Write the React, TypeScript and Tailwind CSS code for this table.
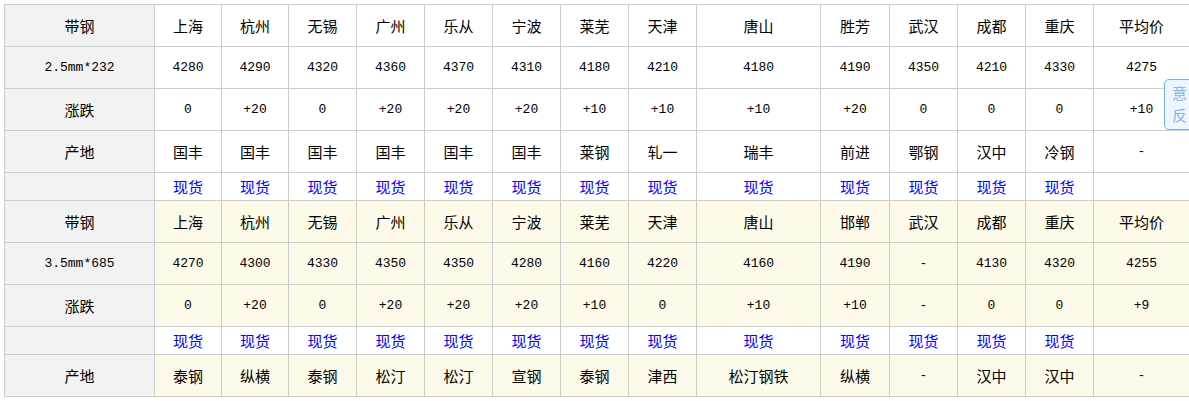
import React from "react";

const cities1 = ["上海", "杭州", "无锡", "广州", "乐从", "宁波", "莱芜", "天津", "唐山", "胜芳", "武汉", "成都", "重庆", "平均价"];
const cities2 = ["上海", "杭州", "无锡", "广州", "乐从", "宁波", "莱芜", "天津", "唐山", "邯郸", "武汉", "成都", "重庆", "平均价"];

const block1 = {
  spec: "2.5mm*232",
  cities: cities1,
  prices: ["4280", "4290", "4320", "4360", "4370", "4310", "4180", "4210", "4180", "4190", "4350", "4210", "4330", "4275"],
  changes: ["0", "+20", "0", "+20", "+20", "+20", "+10", "+10", "+10", "+20", "0", "0", "0", "+10"],
  origins: ["国丰", "国丰", "国丰", "国丰", "国丰", "国丰", "莱钢", "轧一", "瑞丰", "前进", "鄂钢", "汉中", "冷钢", "-"],
};

const block2 = {
  spec: "3.5mm*685",
  cities: cities2,
  prices: ["4270", "4300", "4330", "4350", "4350", "4280", "4160", "4220", "4160", "4190", "-", "4130", "4320", "4255"],
  changes: ["0", "+20", "0", "+20", "+20", "+20", "+10", "0", "+10", "+10", "-", "0", "0", "+9"],
  origins: ["泰钢", "纵横", "泰钢", "松汀", "松汀", "宣钢", "泰钢", "津西", "松汀钢铁", "纵横", "-", "汉中", "汉中", "-"],
};

const cnFont = "[font-family:'Noto_Sans_CJK_SC','Noto_Sans',sans-serif] text-[15px]";
const monoFont = "[font-family:'Liberation_Mono','DejaVu_Sans_Mono',monospace] text-[13px]";

function C({ children, bg, mono, link }: { children?: React.ReactNode; bg: string; mono?: boolean; link?: boolean }) {
  return (
    <div
      className={`flex items-center justify-center border-r border-b border-[#cccccc] ${bg} ${
        mono ? monoFont : cnFont
      } ${link ? "text-[#0000ff]" : "text-black"} leading-none whitespace-nowrap`}
    >
      {children}
    </div>
  );
}

function Block({ data, cream }: { data: typeof block1; cream: boolean }) {
  const dbg = cream ? "bg-[#fdfaea]" : "bg-white";
  const head = "bg-[#f2f2f2]";
  const isNum = (s: string) => /^[-+0-9.]+$/.test(s);
  const spotRow = (
    <>
      <C bg={head}></C>
      {data.cities.map((_, i) =>
        i < 13 ? (
          <C key={"s" + i} bg="bg-white" link>
            现货
          </C>
        ) : (
          <C key={"s" + i} bg="bg-white"></C>
        )
      )}
    </>
  );
  const originRow = (
    <>
      <C bg={head}>产地</C>
      {data.origins.map((c, i) => (
        <C key={"o" + i} bg={dbg} mono={isNum(c)}>
          {c}
        </C>
      ))}
    </>
  );
  return (
    <>
      <C bg={head}>带钢</C>
      {data.cities.map((c, i) => (
        <C key={"c" + i} bg={dbg}>
          {c}
        </C>
      ))}
      <C bg={head} mono>
        {data.spec}
      </C>
      {data.prices.map((c, i) => (
        <C key={"p" + i} bg={dbg} mono>
          {c}
        </C>
      ))}
      <C bg={head}>涨跌</C>
      {data.changes.map((c, i) => (
        <C key={"d" + i} bg={dbg} mono>
          {c}
        </C>
      ))}
      {cream ? (
        <>
          {spotRow}
          {originRow}
        </>
      ) : (
        <>
          {originRow}
          {spotRow}
        </>
      )}
    </>
  );
}

export default function App() {
  return (
    <div className="relative w-[1189px] h-[401px] overflow-hidden bg-white">
      <div className="pl-[4px] pt-[4px]">
        <div className="grid w-max grid-cols-[150px_67px_67px_68px_68px_68px_68px_68px_68px_124px_69px_68px_68px_68px_96px] grid-rows-[42px_42px_42px_42px_28px_42px_42px_42px_28px_42px] border-l border-t border-[#cccccc]">
          <Block data={block1} cream={false} />
          <Block data={block2} cream={true} />
        </div>
      </div>
      <div className="absolute left-[1164px] top-[79px] w-[40px] h-[51px] rounded-l-[5px] border border-[#74b2ee] bg-[#eef5fd] pl-[7px] pt-[2px] text-[15px] leading-[22px] text-[#86b6ea] [font-family:'Noto_Sans_CJK_SC',sans-serif]">
        <div>意</div>
        <div>反</div>
      </div>
    </div>
  );
}
